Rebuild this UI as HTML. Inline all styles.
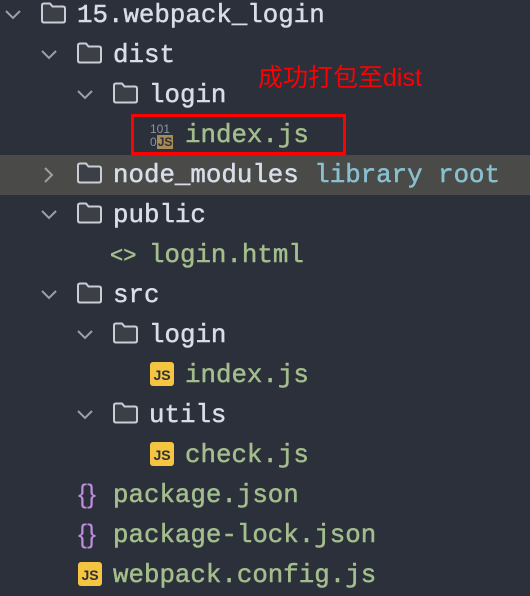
<html><head><style>
body{margin:0;width:530px;height:596px;background:#2b303b;overflow:hidden;position:relative;font-family:"Liberation Mono",monospace;}
.r{position:absolute;left:0;width:530px;height:40px;}
.t{position:absolute;top:6px;font-size:25.8px;line-height:30px;color:#d8dee9;white-space:pre;-webkit-text-stroke:0.5px currentColor;}
.g{color:#a3be8c}
.chev{position:absolute;top:11px;width:18px;height:18px}
.fold{position:absolute;top:7px;width:27px;height:22px}
.js{position:absolute;top:7px;width:24px;height:24px;background:#f5c542;border-radius:3px;font:bold 14px "Liberation Sans",sans-serif;color:#2b303b;text-align:center;line-height:26px}
.br{position:absolute;top:4px;font-size:27px;color:#c08ee0;font-family:"Liberation Sans",sans-serif}
</style></head><body>
<svg width="0" height="0" style="position:absolute"><defs>
<symbol id="f" viewBox="0 0 27 22"><path d="M2 3.5 Q2 1.5 4 1.5 H10 L12.5 4.5 H23 Q25 4.5 25 6.5 V18.5 Q25 20.5 23 20.5 H4 Q2 20.5 2 18.5 Z" fill="#3c3f45" stroke="#c9ced6" stroke-width="2"/></symbol>
<symbol id="d" viewBox="0 0 18 18"><path d="M2 5 L9 12 L16 5" fill="none" stroke="#9aa0a8" stroke-width="2"/></symbol>
<symbol id="rt" viewBox="0 0 18 18"><path d="M5 2 L12 9 L5 16" fill="none" stroke="#9aa0a8" stroke-width="2"/></symbol>
</defs></svg>

<div class="r" style="top:-5px"><svg class="chev" style="left:4px"><use href="#d"/></svg><svg class="fold" style="left:40px"><use href="#f"/></svg><div class="t" style="left:77px">15.webpack_login</div></div>
<div class="r" style="top:35px"><svg class="chev" style="left:40px"><use href="#d"/></svg><svg class="fold" style="left:76px"><use href="#f"/></svg><div class="t" style="left:113px">dist</div></div>
<div class="r" style="top:75px"><svg class="chev" style="left:76px"><use href="#d"/></svg><svg class="fold" style="left:112px"><use href="#f"/></svg><div class="t" style="left:149px">login</div></div>
<div class="r" style="top:115px"><div style="position:absolute;left:150px;top:8px;font:12px 'Liberation Sans',sans-serif;color:#8a93a8;line-height:13px">101<br>0<span style="background:#a88a55;color:#2b303b;font-weight:bold;padding:0 1px">JS</span></div><div class="t g" style="left:185px">index.js</div></div>
<div style="position:absolute;left:131px;top:114px;width:209px;height:35px;border:3px solid #f00"></div>
<div style="position:absolute;left:258px;top:58px;font:25px 'Liberation Sans','Noto Sans CJK SC',sans-serif;color:#f00">成功打包至dist</div>
<div class="r" style="top:155px;background:#4a4a48"><svg class="chev" style="left:40px"><use href="#rt"/></svg><svg class="fold" style="left:76px"><use href="#f"/></svg><div class="t" style="left:113px">node_modules <span style="color:#88c0d0">library root</span></div></div>
<div class="r" style="top:195px"><svg class="chev" style="left:40px"><use href="#d"/></svg><svg class="fold" style="left:76px"><use href="#f"/></svg><div class="t" style="left:113px">public</div></div>
<div class="r" style="top:235px"><div class="t" style="left:110px;color:#a3be8c;font-size:22px;top:7px">&lt;&gt;</div><div class="t g" style="left:149px">login.html</div></div>
<div class="r" style="top:275px"><svg class="chev" style="left:40px"><use href="#d"/></svg><svg class="fold" style="left:76px"><use href="#f"/></svg><div class="t" style="left:113px">src</div></div>
<div class="r" style="top:315px"><svg class="chev" style="left:76px"><use href="#d"/></svg><svg class="fold" style="left:112px"><use href="#f"/></svg><div class="t" style="left:149px">login</div></div>
<div class="r" style="top:355px"><div class="js" style="left:150px">JS</div><div class="t g" style="left:185px">index.js</div></div>
<div class="r" style="top:395px"><svg class="chev" style="left:76px"><use href="#d"/></svg><svg class="fold" style="left:112px"><use href="#f"/></svg><div class="t" style="left:149px">utils</div></div>
<div class="r" style="top:435px"><div class="js" style="left:150px">JS</div><div class="t g" style="left:185px">check.js</div></div>
<div class="r" style="top:475px"><div class="br" style="left:78px">{}</div><div class="t g" style="left:113px">package.json</div></div>
<div class="r" style="top:515px"><div class="br" style="left:78px">{}</div><div class="t g" style="left:113px">package-lock.json</div></div>
<div class="r" style="top:555px"><div class="js" style="left:78px">JS</div><div class="t g" style="left:113px">webpack.config.js</div></div>
</body></html>
